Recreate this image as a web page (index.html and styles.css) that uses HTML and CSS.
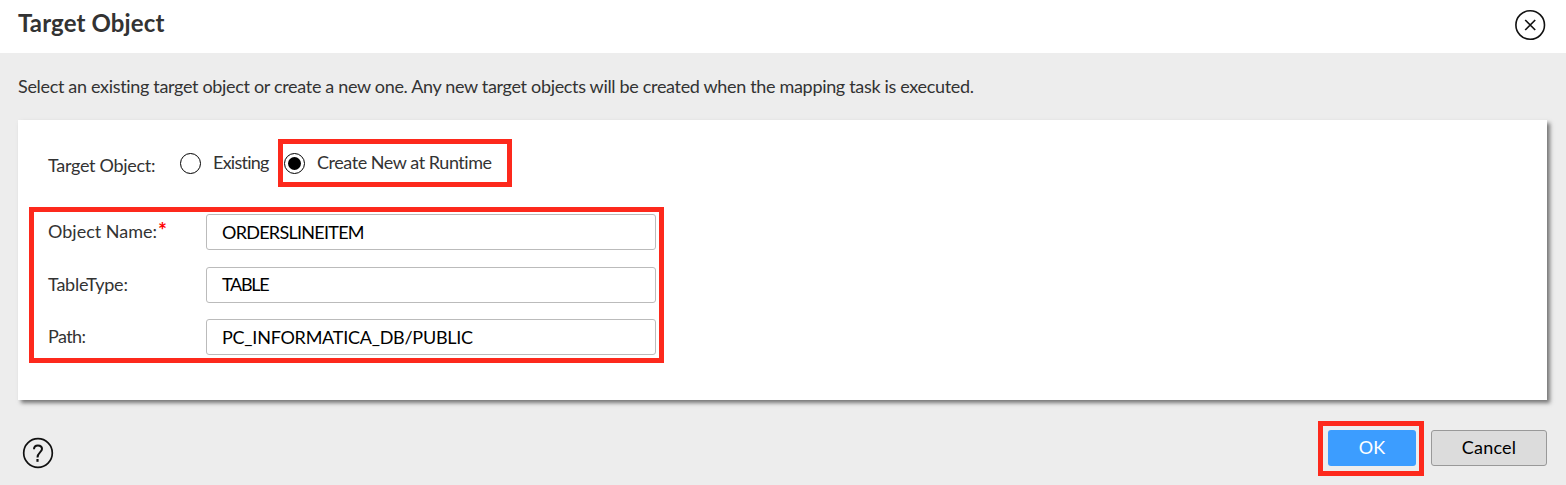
FILE: index.html
```html
<!DOCTYPE html>
<html lang="en">
<head>
<meta charset="utf-8">
<title>Target Object</title>
<link rel="stylesheet" href="styles.css">
</head>
<body>
<div class="dialog">
  <header class="header">
    <h1 class="title">Target Object</h1>
    <button class="icon-button" aria-label="Close">
      <svg width="32" height="32" viewBox="0 0 32 32" fill="none" stroke="#111">
        <circle cx="16.2" cy="16" r="14.3" stroke-width="1.6"/>
        <path d="M11.2 11l10 10M21.2 11L11.2 21" stroke-width="1.7"/>
      </svg>
    </button>
  </header>
  <main class="body">
    <p class="intro">Select an existing target object or create a new one. Any new target objects will be created when the mapping task is executed.</p>
    <section class="panel">
      <div class="choice-row">
        <span class="label choice-label">Target Object:</span>
        <label class="radio"><span class="dot"></span><span class="existing">Existing</span></label>
        <label class="radio highlight-runtime"><span class="dot dot-on"></span><span class="runtime">Create New at Runtime</span></label>
      </div>
      <div class="fields">
        <div class="field"><span class="label name-label">Object Name:<span class="required">*</span></span><div class="input"><span class="v-name">ORDERSLINEITEM</span></div></div>
        <div class="field"><span class="label type-label">TableType:</span><div class="input"><span class="v-type">TABLE</span></div></div>
        <div class="field"><span class="label path-label">Path:</span><div class="input"><span class="v-path">PC_INFORMATICA_DB/PUBLIC</span></div></div>
      </div>
    </section>
  </main>
  <footer class="footer">
    <button class="icon-button" aria-label="Help">
      <svg width="32" height="32" viewBox="0 0 32 32" fill="none" stroke="#111">
        <circle cx="16" cy="16" r="14.3" stroke-width="1.7"/>
        <path d="M12 12.2C12 9.7 13.6 8.4 15.9 8.4S20 9.8 20 12C20 15 15.5 15.6 15.5 20.6" stroke-width="2"/>
        <path d="M15.5 22v2.8" stroke-width="2.2"/>
      </svg>
    </button>
    <div class="actions">
      <button class="button ok"><span class="t-ok">OK</span></button>
      <button class="button cancel"><span class="t-cancel">Cancel</span></button>
    </div>
  </footer>
</div>
</body>
</html>
```

FILE: styles.css
```css
* { box-sizing: border-box; }
body {
  margin: 0;
  font-family: Lato, "Liberation Sans", sans-serif;
  font-size: 18px;
  line-height: 24px;
  color: #333;
}
button { font: inherit; margin: 0; padding: 0; }
.dialog { display: flex; flex-direction: column; height: 485px; background: #ededed; overflow: hidden; }
.header { display: flex; justify-content: space-between; height: 53px; padding: 9px 20px 0 18px; background: #fff; }
.title { margin: 0; font-size: 24px; line-height: 28px; font-weight: 700; letter-spacing: 0.12px; }
.icon-button { display: block; width: 32px; height: 32px; border: 0; background: none; }
.icon-button svg { display: block; }
.intro { margin: 0; padding: 21px 0 22px 18px; white-space: nowrap; letter-spacing: -0.325px; }
.panel {
  height: 280px;
  margin: 0 19px 0 18px;
  padding: 19px 0 0 11px;
  background: #fff;
  box-shadow: 3px 3px 4px rgba(0, 0, 0, 0.5);
}
.label { flex: none; white-space: nowrap; }
.choice-row { display: flex; height: 48px; }
.choice-label { width: 151px; padding: 14px 0 0 19px; letter-spacing: -0.3px; }
.radio { display: flex; align-items: center; gap: 12px; width: 98px; white-space: nowrap; }
.dot { display: flex; flex: none; width: 21px; height: 21px; border: 1px solid #000; border-radius: 50%; background: #fff; }
.dot-on::after { content: ""; width: 13px; height: 13px; margin: 3px; border-radius: 50%; background: #000; }
.existing { padding-bottom: 2px; letter-spacing: -0.75px; }
.runtime { padding-bottom: 2px; letter-spacing: -0.45px; }
.highlight-runtime { width: 234px; border: 5px solid #fd291c; padding-left: 1px; }
.fields {
  display: flex;
  flex-direction: column;
  gap: 17px;
  width: 635px;
  height: 156px;
  margin-top: 20px;
  padding: 2px 3px 0 0;
  border: 5px solid #fd291c;
}
.field { display: flex; align-items: center; height: 36px; }
.field:last-child { margin-top: -1px; }
.field .label { width: 172px; padding: 0 0 2px 14px; }
.type-label { letter-spacing: -0.2px; }
.path-label { letter-spacing: -0.6px; }
.required { color: #f00; margin-left: 1px; font-size: 21px; font-weight: 700; line-height: 20px; }
.input { display: flex; align-items: center; width: 450px; height: 36px; padding-left: 15px; border: 1px solid #bbb; border-radius: 3px; color: #000; }
.v-name { letter-spacing: -0.73px; }
.v-type { padding-bottom: 2px; letter-spacing: -1.3px; }
.v-path { letter-spacing: -0.25px; }
.footer { display: flex; justify-content: space-between; padding: 21px 19px 0 22px; }
.footer > .icon-button { margin-top: 16px; }
.actions { display: flex; gap: 7px; height: 55px; }
.button { height: 36px; border-radius: 3px; }
.ok { width: 106px; height: 55px; padding: 4px 3px 5px 5px; border: 5px solid #fd291c; border-radius: 0; background: none; color: #fff; }
.t-ok { display: flex; align-items: center; justify-content: center; width: 88px; height: 36px; padding-bottom: 2px; border-radius: 3px; background: #3c9dff; }
.cancel { width: 116px; margin-top: 9px; padding-bottom: 2px; border: 1px solid #999; background: #dcdcdc; color: #000; }
.t-cancel { letter-spacing: 0.2px; }
```
